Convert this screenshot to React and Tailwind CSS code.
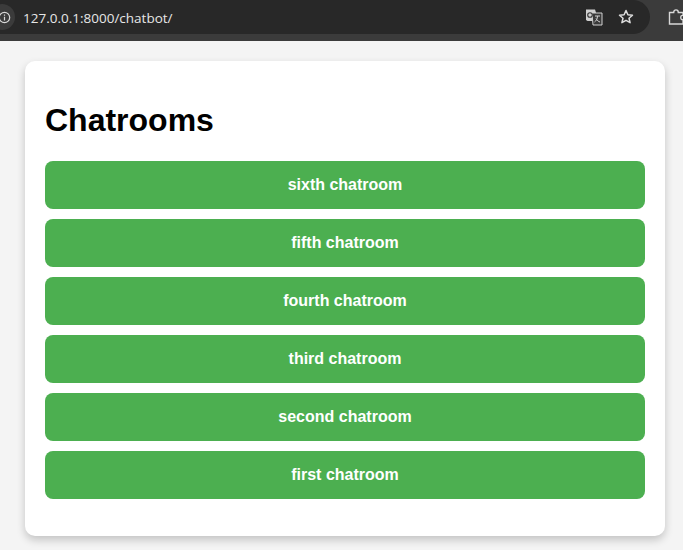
import React from 'react';

const rooms = ['sixth chatroom', 'fifth chatroom', 'fourth chatroom', 'third chatroom', 'second chatroom', 'first chatroom'];

function BrowserBar() {
  return (
    <div className="h-[41px] bg-[#3b3b3b] flex items-start overflow-hidden font-['Open_Sans',sans-serif]">
      <div className="relative w-[650px] h-[34px] bg-[#282828] rounded-r-[17px] shrink-0 flex items-center">
        <div className="ml-[-11px] w-[26px] h-[26px] rounded-full bg-[#3b3b3b] flex items-center justify-center pl-[4px]">
          <svg width="13" height="13" viewBox="0 0 14 14" fill="none" stroke="#d8d8d8" strokeWidth="1.3">
            <circle cx="7" cy="7" r="5.6" />
            <path d="M7 6.2v4M7 3.8v1.3" />
          </svg>
        </div>
        <span className="ml-[8px] text-[13.5px] leading-[20px] pt-[1px] text-[#e6e6e6]">127.0.0.1:8000/chatbot/</span>
        <div className="ml-auto flex items-center gap-[14px] mr-[15px]">
          <svg width="18" height="18" viewBox="0 0 18 18">
            <path d="M1 1.5h9l1 3v8.5H2.5L1 12z" fill="#d0d0d0" />
            <path d="M7 5h10v12H8z" fill="#3a3a3a" stroke="#d0d0d0" strokeWidth="1" />
            <circle cx="5" cy="7" r="2.3" fill="none" stroke="#333" strokeWidth="1.1" />
            <path d="M10 8h5M12.5 8c0 3-1.5 5-3 6M11 10.5c1 2 2.500 3 4 3.500" fill="none" stroke="#d0d0d0" strokeWidth="1" />
          </svg>
          <svg width="18" height="18" viewBox="0 0 18 18" fill="none" stroke="#dcdcdc" strokeWidth="1.5" strokeLinejoin="round">
            <path d="M9 2.500l1.900 4.300 4.600.4-3.500 3 1.100 4.500L9 12.300l-4.100 2.400L6 10.200l-3.500-3 4.600-.4z" />
          </svg>
        </div>
      </div>
      <svg className="ml-[18px] mt-[8px] shrink-0" width="18" height="18" viewBox="0 0 18 18" fill="none" stroke="#d8d8d8" strokeWidth="1.4">
        <path d="M1.500 4.500h4.200c0-3.500 4.600-3.500 4.600 0h4.700v3c-3-1-3 5 0 4v4.500H1.500z" />
      </svg>
    </div>
  );
}

function App() {
  return (
    <div className="h-[550px] overflow-hidden bg-[#f4f4f4] font-['Liberation_Sans',Arial,sans-serif]">
      <BrowserBar />
      <main className="pt-5 px-[25px]">
        <div className="w-[640px] h-[475px] bg-white rounded-[10px] shadow-[0_4px_8px_rgba(0,0,0,0.2)] px-5 pt-5">
          <h1 className="text-[32px] font-bold text-black leading-[37px] mt-[21px] mb-[22px]">Chatrooms</h1>
          <div className="flex flex-col gap-[10px]">
            {rooms.map(room => (
              <button key={room} className="h-[48px] w-full rounded-lg bg-[#4caf50] text-white text-base font-bold">
                {room}
              </button>
            ))}
          </div>
        </div>
      </main>
    </div>
  );
}

export default App;
